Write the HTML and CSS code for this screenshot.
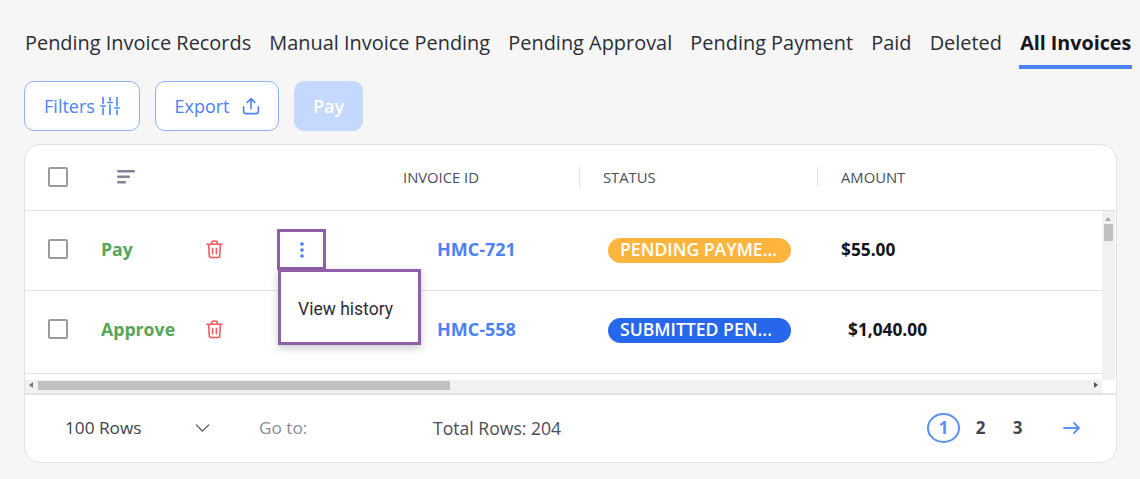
FILE: index.html
```html
<!DOCTYPE html>
<html lang="en">
<head>
<meta charset="utf-8">
<title>Invoices</title>
<link rel="stylesheet" href="styles.css">
</head>
<body>
<nav class="tabs">
  <a class="tab">Pending Invoice Records</a>
  <a class="tab">Manual Invoice Pending</a>
  <a class="tab">Pending Approval</a>
  <a class="tab">Pending Payment</a>
  <a class="tab">Paid</a>
  <a class="tab">Deleted</a>
  <a class="tab active">All Invoices</a>
</nav>
<div class="actions">
  <button class="btn btn-filters">Filters
    <svg width="20" height="20" viewBox="0 0 20 20" fill="none" stroke="currentColor" stroke-width="1.6" stroke-linecap="round"><path d="M3 1.500v6M3 12v6.500M10 1.500v3M10 9v9.500M17 1.500v8.500M17 14.500v4M.8 10h4.400M7.800 6.500h4.400M14.800 12h4.400"/></svg>
  </button>
  <button class="btn btn-export">Export
    <svg width="18" height="18" viewBox="0 0 20 20" fill="none" stroke="currentColor" stroke-width="1.800" stroke-linecap="round" stroke-linejoin="round"><path d="M10 13V2M5.800 6 10 1.800 14.200 6M1.800 11v4.500a3 3 0 0 0 3 3h10.400a3 3 0 0 0 3-3V11"/></svg>
  </button>
  <button class="btn btn-pay">Pay</button>
</div>
<section class="card">
  <header class="head">
    <span class="check"></span>
    <svg class="sort" width="18" height="14" viewBox="0 0 18 14" fill="#7f8595"><rect width="18" height="2.500" rx="1"/><rect y="5.500" width="13" height="2.500" rx="1"/><rect y="11" width="9" height="2.500" rx="1"/></svg>
    <span class="th th-id">INVOICE ID</span>
    <span class="th th-status">STATUS</span>
    <span class="th th-amount">AMOUNT</span>
  </header>
  <div class="viewport">
    <div class="rows">
      <div class="row">
        <span class="check"></span>
        <a class="act">Pay</a>
        <svg class="trash" width="17" height="19" viewBox="0 0 18 20" fill="none" stroke="#f6595f" stroke-width="1.700" stroke-linecap="round" stroke-linejoin="round"><path d="M1 4.500h16M6 4.500V3a2 2 0 0 1 2-2h2a2 2 0 0 1 2 2v1.500M2.800 4.500l.7 12a2 2 0 0 0 2 2h7a2 2 0 0 0 2-2l.7-12M7 9v5.500M11 9v5.500"/></svg>
        <span class="kebab-cell">
          <button class="kebab"><svg width="6" height="16" viewBox="0 0 6 16" fill="#3f7bf6"><circle cx="3" cy="2" r="1.800"/><circle cx="3" cy="8" r="1.800"/><circle cx="3" cy="14" r="1.800"/></svg></button>
        </span>
        <a class="id">HMC-721</a>
        <span class="badge badge-pending">PENDING PAYME...</span>
        <span class="amount">$55.00</span>
      </div>
      <div class="row row-last">
        <span class="check"></span>
        <a class="act">Approve</a>
        <svg class="trash" width="17" height="19" viewBox="0 0 18 20" fill="none" stroke="#f6595f" stroke-width="1.700" stroke-linecap="round" stroke-linejoin="round"><path d="M1 4.500h16M6 4.500V3a2 2 0 0 1 2-2h2a2 2 0 0 1 2 2v1.500M2.800 4.500l.7 12a2 2 0 0 0 2 2h7a2 2 0 0 0 2-2l.7-12M7 9v5.500M11 9v5.500"/></svg>
        <span class="kebab-cell"></span>
        <a class="id">HMC-558</a>
        <span class="badge badge-submitted">SUBMITTED PEN...</span>
        <span class="amount amount-wide">$1,040.00</span>
      </div>
    </div>
    <div class="vbar">
      <i class="arrow-up"></i>
      <i class="vthumb"></i>
    </div>
    <div class="hbar">
      <i class="arrow-left"></i>
      <i class="hthumb"></i>
      <i class="arrow-right"></i>
    </div>
    <div class="corner"></div>
  </div>
  <div class="menu">View history</div>
  <footer class="foot">
    <span class="rows-select">100 Rows
      <svg width="15" height="8" viewBox="0 0 16 9" fill="none" stroke="#3f4a5e" stroke-width="1.300" stroke-linecap="round" stroke-linejoin="round"><path d="M1 1l7 7 7-7"/></svg>
    </span>
    <span class="goto">Go to:</span>
    <span class="total">Total Rows: 204</span>
    <div class="pager">
      <span class="page current">1</span>
      <span class="page">2</span>
      <span class="page">3</span>
      <svg class="next" width="17" height="12" viewBox="0 0 17 12" fill="none" stroke="#5b8ff9" stroke-width="1.800" stroke-linecap="round" stroke-linejoin="round"><path d="M1 6h15M11 1l5 5-5 5"/></svg>
    </div>
  </footer>
</section>
</body>
</html>
```
FILE: styles.css
```css
* { box-sizing: border-box; }
html, body { margin: 0; height: 100%; overflow: hidden; }
body {
  background: #f6f6f6;
  font-family: "Open Sans", sans-serif;
  color: #2d2d36;
  padding: 21px 0 0 24px;
  width: 1140px;
}
.tabs { display: flex; gap: 16.200px; height: 48px; }
.tab {
  font-size: 19.920px;
  line-height: 44px;
  height: 48px;
  padding: 0 1px;
  white-space: nowrap;
}
.tab.active { font-size: 19.700px; font-weight: 700; color: #17171f; border-bottom: 4px solid #4c82f7; }
.actions { display: flex; gap: 15px; margin-top: 12px; height: 50px; }
.btn {
  font-family: inherit;
  font-size: 18px;
  border-radius: 10px;
  border: 1px solid #8db2fa;
  background: #fff;
  color: #4c82f7;
  display: flex;
  align-items: center;
  justify-content: center;
  padding: 0;
}
.btn-filters { width: 116px; gap: 5px; }
.btn-export { width: 124px; gap: 12px; }
.btn-pay { width: 69px; background: #c5d8fd; border-color: #c5d8fd; color: #fff; font-weight: 600; }
.card {
  position: relative;
  margin-top: 13px;
  width: 1093px;
  height: 319px;
  background: #fff;
  border: 1px solid #e2e2e2;
  border-radius: 16px;
  overflow: hidden;
}
.check {
  width: 20px;
  height: 20px;
  border: 2px solid #9a9a9a;
  border-radius: 2px;
  background: #fff;
  flex: none;
}
.head {
  display: flex;
  align-items: center;
  height: 66px;
  padding: 0 0 2px 23px;
  border-bottom: 1px solid #e2e2e2;
}
.sort { margin-left: 49px; flex: none; }
.th { font-size: 14.800px; line-height: 20px; color: #4a4d5c; font-weight: 500; }
.th-id { margin-left: 268px; width: 176px; }
.th-status { width: 238px; padding-left: 23px; border-left: 1px solid #e2e2e2; }
.th-amount { padding-left: 23px; border-left: 1px solid #e2e2e2; }
.viewport {
  display: grid;
  grid-template-columns: 1077px 13px;
  grid-template-rows: 169px 13px;
  height: 182px;
}
.rows { overflow: hidden; }
.row {
  display: flex;
  align-items: center;
  height: 80px;
  padding: 0 0 4px 23px;
  border-bottom: 1px solid #e2e2e2;
}
.row-last { height: 83px; padding-bottom: 7px; }
.act { width: 105px; margin-left: 33px; font-size: 17.700px; font-weight: 700; color: #58a55c; }
.trash { flex: none; margin-top: 2px; }
.kebab-cell { width: 214px; padding-left: 54px; flex: none; display: flex; }
.kebab {
  width: 49px;
  height: 41px;
  padding: 0;
  margin-top: 2px;
  border: 3px solid #8f5fa8;
  background: #fff;
  display: flex;
  align-items: center;
  justify-content: center;
}
.id { width: 171px; font-size: 18px; font-weight: 700; color: #4c82f7; }
.badge {
  width: 183px;
  height: 25px;
  margin-top: 4px;
  border-radius: 13px;
  padding-left: 12px;
  color: #fff;
  font-size: 17.600px;
  font-weight: 600;
  line-height: 22px;
  white-space: nowrap;
  overflow: hidden;
}
.badge-pending { background: #fdb53e; }
.badge-submitted { background: #2767ec; }
.amount { margin: 2px 0 0 50px; font-size: 17.300px; font-weight: 700; color: #14141c; }
.amount-wide { margin-left: 57px; }
.vbar { position: relative; background: #f1f1f1; }
.vthumb { position: absolute; left: 2px; top: 13px; width: 9px; height: 17px; background: #c0c0c0; }
.arrow-up {
  position: absolute; left: 3px; top: 6px;
  border: 3.500px solid transparent; border-top: 0; border-bottom: 4px solid #a9a9a9;
}
.hbar { position: relative; background: #f1f1f1; }
.hthumb { position: absolute; left: 13px; top: 1px; width: 412px; height: 9px; background: #c0c0c0; }
.arrow-left {
  position: absolute; left: 4px; top: 2px;
  border: 3.500px solid transparent; border-left: 0; border-right: 4px solid #777;
}
.arrow-right {
  position: absolute; right: 4px; top: 2px;
  border: 3.500px solid transparent; border-right: 0; border-left: 4px solid #555;
}
.corner { background: #fff; }
.menu {
  position: absolute;
  left: 253px;
  top: 124px;
  width: 143px;
  height: 76px;
  border: 3px solid #8f5fa8;
  background: #fff;
  box-shadow: 0 3px 8px rgba(0, 0, 0, .22);
  font-family: Roboto, sans-serif;
  font-size: 17.500px;
  line-height: 74px;
  padding-left: 17px;
  color: #2d2d36;
  white-space: nowrap;
}
.foot {
  display: flex;
  align-items: center;
  height: 69px;
  padding: 0 0 2px 40px;
  border-top: 2px solid #e2e2e2;
  font-size: 17.200px;
  color: #4a4d5c;
}
.rows-select { width: 194px; display: flex; align-items: center; justify-content: space-between; padding-right: 49px; flex: none; color: #3d3f4b; }
.goto { width: 174px; color: #8a8c96; flex: none; }
.total { flex: none; font-size: 17.600px; }
.pager { margin-left: auto; display: flex; align-items: center; padding-right: 36px; }
.page {
  width: 33px;
  height: 30px;
  margin-right: 4px;
  font-size: 17px;
  font-weight: 700;
  line-height: 26px;
  text-align: center;
  color: #45454f;
  border: 2px solid transparent;
  border-radius: 50%;
}
.page.current { color: #5b8ff9; border-color: #5b8ff9; }
.next { margin-left: 25px; }
```
